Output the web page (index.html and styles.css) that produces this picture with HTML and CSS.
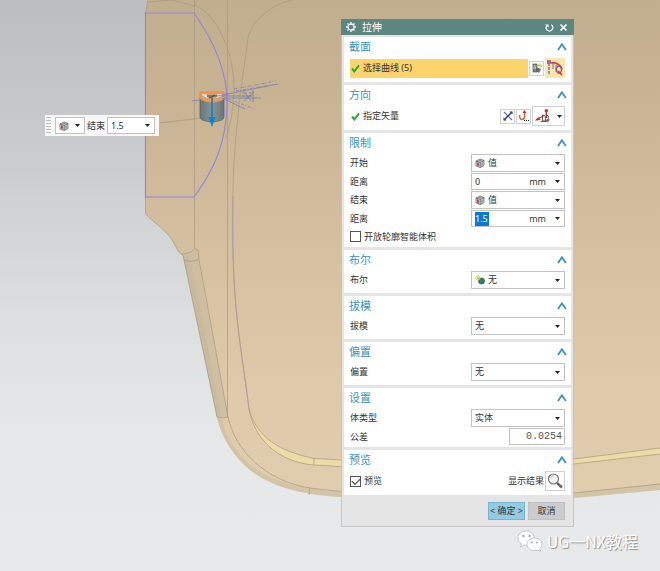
FILE: index.html
```html
<!DOCTYPE html>
<html lang="zh-CN">
<head>
<meta charset="utf-8">
<title>拉伸</title>
<link rel="stylesheet" href="styles.css">
</head>
<body>
<svg class="defs" width="0" height="0" aria-hidden="true">
  <symbol id="chevron" viewBox="0 0 10 8"><path d="M1 7 4.900 1.300 8.900 7" fill="none" stroke="#3a93bd" stroke-width="1.800"/></symbol>
  <symbol id="arrow" viewBox="0 0 5 3"><path d="M0 0h5L2.500 3z" fill="#222"/></symbol>
  <symbol id="tick" viewBox="0 0 9 9"><path d="M1 4.500 3.300 7.300 8 1.300" fill="none" stroke="#25ad38" stroke-width="2"/></symbol>
  <symbol id="cube" viewBox="0 0 10 10">
    <path d="M1 3 5 1l4 1.500v5L5.500 9.500 1 8z" fill="#d7d9d8" stroke="#626568" stroke-width=".8"/>
    <path d="M1 3l4.200 1.400L9 2.500M5.200 4.400v5" fill="none" stroke="#555" stroke-width=".8"/>
    <path d="M2 4.300l2 .8v3l-2-.6z" fill="#b8525a"/><path d="M6.300 5l1.800-.8v3L6.300 8.200z" fill="#7fae8b"/>
    <path d="M3 2.700 5 1.800l2 .6-2 1z" fill="#8c8db8"/>
  </symbol>
</svg>

<main class="viewport">
  <svg class="model" viewBox="0 0 660 571" preserveAspectRatio="xMinYMin slice" aria-hidden="true">
    <defs>
      <linearGradient id="skin" x1="0" y1="0" x2="0" y2="500" gradientUnits="userSpaceOnUse">
        <stop offset="0" stop-color="#c1ae8f"/><stop offset=".2" stop-color="#c8b493"/>
        <stop offset=".44" stop-color="#d2bd9e"/><stop offset=".6" stop-color="#d8c4a2"/>
        <stop offset=".8" stop-color="#dfcaab"/><stop offset="1" stop-color="#e0ceaf"/>
      </linearGradient>
      <linearGradient id="metal" x1="200" x2="224" y1="0" y2="0" gradientUnits="userSpaceOnUse">
        <stop offset="0" stop-color="#66777b"/><stop offset=".5" stop-color="#87949a"/><stop offset="1" stop-color="#687579"/>
      </linearGradient>
    </defs>
    <path fill="url(#skin)" d="M148 0 145.500 12V214C153 222 162 227 170 237 176 245 178 254 183 255L217 417C222 440 238 464 260 477 285 491 310 495 341 497Q470 510 574 498L660 490V0z"/>
    <path fill="#cbbca1" opacity=".75" d="M183 255C189 256 193 253 196 249L228 417H217z"/>
    <path fill="#bdb29c" opacity=".35" d="M183 256 217 417C222 440 238 464 260 477 285 491 310 495 341 497Q470 510 574 498L660 490V484L574 493Q450 503 341 492C312 490 287 486 264 474 242 462 226 441 221 417L190 256z"/>
    <path fill="#ecdda8" d="M249 409C257 438 279 451 314 458.500L341 460Q460 470 574 459L660 448V454L574 464Q460 477 341 466.500L314 465C277 462 254 438 249 409z"/>
    <g fill="none" stroke="#a8987f" stroke-width=".7">
      <path d="M148 0 145.500 12V214C153 222 162 227 170 237 176 245 178 254 183 255M194.500 0V248M227.500 0V417M149 2 172 0 194 6 198 0"/>
      <path d="M182 254C188 254 193 252 195 248L198 250 199 260 228 417M184 260Q192 263 199 259M217 417Q223 419 228 417C235 450 265 481 310 488L341 491.500M217 417 183 255M310 488 309 495"/>
      <path d="M292 0C274 4 250 20 248 39L240 95C235 145 232 170 233 230 233 310 240 340 249 409 257 438 279 451 314 458.500L341 460M249 409C254 438 277 462 314 465L341 466.500M314 458.500V465"/>
      <path d="M194 5C215 12 234 50 234 88 234 111 228 132 226 138M574 459 660 448M574 464 660 454M574 493 660 484"/>
      <path stroke="#a998a6" d="M233 196C230 300 242 350 249 409"/>
      <path d="M160 123 201 118"/>
    </g>
    <path d="M145.500 13H194C211 37 227 68 227 102 227 142 214 170 194 197H145.500z" fill="none" stroke="#9683e3" stroke-width="1.200"/>
    <path d="M200 97V117Q200 121 212 122 224 121 224 117V97z" fill="url(#metal)" stroke="#535e61" stroke-width=".7"/>
    <path d="M200 92H224V97Q224 101 212 102 200 101 200 97z" fill="#d3a175" stroke="#f39141" stroke-width="1.500"/>
    <path d="M202 94h4l2 4q-5-1-6-4M222 94h-4l-2 4q5-1 6-4" fill="#e2e0df"/>
    <path d="M207 96h10M209 98l6-3" stroke="#4e4c39"/>
    <path d="M212 97V119" stroke="#1777b6" stroke-width="1.500"/><path d="M208.500 117H215.500L212 127z" fill="#0788cf"/>
    <g fill="none" stroke="#6578ba" stroke-width=".7">
      <path d="M192 101 200 100M217 96 278 84M224 98H261M222 96H251M222 98 245 109M253 90V102"/>
      <path stroke="#8774a9" stroke-dasharray="3 1 1 2" d="M234 89 276 81M236 91 271 85M228 99 255 109M242 93H252M242 96H255"/>
      <path d="M243 90 251 101M244 101 254 92"/>
    </g>
  </svg>

  <form class="mini-bar">
    <span class="grip"></span>
    <span class="field mini-kind"><svg class="ico"><use href="#cube"/></svg><select aria-label="终点类型"><option></option></select><svg class="arrow"><use href="#arrow"/></svg></span>
    <label for="quick">结束</label>
    <span class="field mini-value"><input id="quick" type="text" value="1.5"><svg class="arrow"><use href="#arrow"/></svg></span>
  </form>

  <form class="dialog">
    <header class="titlebar">
      <svg class="gear" viewBox="0 0 10 10"><circle cx="5" cy="5" r="3" fill="none" stroke="#fff" stroke-width="1.300"/><path d="M5 0v1.500M5 8.500V10M0 5h1.500M8.500 5H10M1.500 1.500l1 1M7.500 7.500l1 1M8.500 1.500l-1 1M2.500 7.500l-1 1" stroke="#fff" stroke-width="1.300"/></svg>
      <h1>拉伸</h1>
      <button type="button" aria-label="重置"><svg viewBox="0 0 9 9"><path d="M6.300 1.800A3.300 3.300 0 1 1 1.600 3" fill="none" stroke="#fff" stroke-width="1.200"/><path d="M0 1.500h3.500v3z" fill="#fff"/></svg></button>
      <button type="button" aria-label="关闭"><svg viewBox="0 0 9 9"><path d="M1.500 1.500l6 6M7.500 1.500l-6 6" stroke="#fff" stroke-width="1.700"/></svg></button>
    </header>

    <section>
      <h2>截面<svg><use href="#chevron"/></svg></h2>
      <div class="row tall">
        <span class="pick active"><svg class="tick"><use href="#tick"/></svg>选择曲线 (5)</span>
        <button type="button" class="tool" aria-label="绘制截面"><svg viewBox="0 0 12 12"><path d="M2 2h4v8H2z" fill="#7f8884" stroke="#505652" stroke-width=".7"/><path d="M3 3l4 6M2 6h4" stroke="#ddd" stroke-width=".8"/><path d="M5 5l5 2-2 4-3-2z" fill="#626b67"/><path d="M9 1v5M6.500 3.500h5M7 2l4 3" stroke="#bad93d"/></svg></button>
        <button type="button" class="tool big lit" aria-label="曲线"><svg viewBox="0 0 18 18"><path d="M3 15V3" stroke="#5b63ba" stroke-width="1.300" stroke-dasharray="3 1"/><path d="M3 4Q12 2 16 10" fill="none" stroke="#d63c35" stroke-width="1.700"/><path d="M7 4v6M10 6v7" stroke="#7b69b1"/><path d="M1 1h4v4H1z" fill="#9a71a8"/><ellipse cx="13" cy="10.500" rx="2.500" ry="3.500" fill="none" stroke="#87559b" stroke-width="1.300"/><path d="M12 12l4 4" stroke="#cf3234" stroke-width="1.600"/></svg></button>
      </div>
    </section>

    <section>
      <h2>方向<svg><use href="#chevron"/></svg></h2>
      <div class="row tall">
        <span class="pick"><svg class="tick"><use href="#tick"/></svg>指定矢量</span>
        <button type="button" class="tool" aria-label="反向"><svg viewBox="0 0 12 12"><path d="M2 2l8 8" stroke="#6c7280" stroke-width="1.200"/><path d="M2 10l8-8" stroke="#2933b6" stroke-width="1.300"/><path d="M7.500 1.500h3v3zM1.500 7.500v3h3z" fill="#2933b6"/></svg></button>
        <button type="button" class="tool" aria-label="矢量对话框"><svg viewBox="0 0 12 12"><path d="M1.500 5Q1.500 9.500 4 9.500T6.500 7V2" fill="none" stroke="#d86539" stroke-width="1.500"/><path d="M4.500 3l2-3 2 3z" fill="#d52c29"/><path d="M6 10.500h1M8 10.500h1M10 10.500h1" stroke="#222" stroke-width="1.200"/></svg></button>
        <button type="button" class="tool wide" aria-label="自动判断矢量"><svg class="vector" viewBox="0 0 18 16"><path d="M1 12l8-4M12 10V3" fill="none" stroke="#bf302e" stroke-width="1.300"/><path d="M0 13l4-4 2 3z" fill="#d72929"/><circle cx="12" cy="2.500" r="1.800" fill="#d72929"/><path d="M8 7l3 1v6l-3-1zM11 6l3 2v4l-3 2M6 14l8-1" fill="none" stroke="#544943"/><path d="M12 11l4 1-3 3z" fill="#95634c"/></svg><svg class="arrow"><use href="#arrow"/></svg></button>
      </div>
    </section>

    <section class="limits">
      <h2>限制<svg><use href="#chevron"/></svg></h2>
      <div class="row"><label for="start">开始</label><span class="field"><svg class="ico"><use href="#cube"/></svg><select id="start"><option>值</option></select><svg class="arrow"><use href="#arrow"/></svg></span></div>
      <div class="row number"><label for="start-distance">距离</label><span class="field"><input id="start-distance" type="text" value="0"><span class="unit">mm</span><svg class="arrow"><use href="#arrow"/></svg></span></div>
      <div class="row"><label for="end">结束</label><span class="field"><svg class="ico"><use href="#cube"/></svg><select id="end"><option>值</option></select><svg class="arrow"><use href="#arrow"/></svg></span></div>
      <div class="row number"><label for="end-distance">距离</label><span class="field"><input id="end-distance" class="marked" type="text" value="1.5"><span class="unit">mm</span><svg class="arrow"><use href="#arrow"/></svg></span></div>
      <div class="row number"><label class="check"><input type="checkbox">开放轮廓智能体积</label></div>
    </section>

    <section>
      <h2>布尔<svg><use href="#chevron"/></svg></h2>
      <div class="row"><label for="boolean">布尔</label><span class="field"><svg class="ico" viewBox="0 0 10 10"><circle cx="6.500" cy="6" r="3" fill="#278365" stroke="#205444" stroke-width=".7"/><path d="M3 0v6M0 3h6M1 1l4 4M5 1 1 5" stroke="#c5cd49" stroke-width=".9"/></svg><select id="boolean"><option>无</option></select><svg class="arrow"><use href="#arrow"/></svg></span></div>
    </section>

    <section>
      <h2>拔模<svg><use href="#chevron"/></svg></h2>
      <div class="row"><label for="draft">拔模</label><span class="field"><select id="draft"><option>无</option></select><svg class="arrow"><use href="#arrow"/></svg></span></div>
    </section>

    <section>
      <h2>偏置<svg><use href="#chevron"/></svg></h2>
      <div class="row"><label for="offset">偏置</label><span class="field"><select id="offset"><option>无</option></select><svg class="arrow"><use href="#arrow"/></svg></span></div>
    </section>

    <section class="settings">
      <h2>设置<svg><use href="#chevron"/></svg></h2>
      <div class="row"><label for="body-type">体类型</label><span class="field"><select id="body-type"><option>实体</option></select><svg class="arrow"><use href="#arrow"/></svg></span></div>
      <div class="row number"><label for="tolerance">公差</label><span class="field tolerance"><input id="tolerance" type="text" value="0.0254"></span></div>
    </section>

    <section>
      <h2>预览<svg><use href="#chevron"/></svg></h2>
      <div class="row tall">
        <label class="check"><input type="checkbox" checked>预览</label>
        <label class="result" for="show-result">显示结果</label>
        <button type="button" class="tool big" id="show-result"><svg viewBox="0 0 18 18"><path d="M11 11l5 4.500" stroke="#666" stroke-width="2.400"/><circle cx="7.500" cy="7" r="5" fill="#f1f3f3" stroke="#777" stroke-width="1.200"/><path d="M4.500 6Q5.500 3.500 8 3.500" fill="none" stroke="#bbc1c3"/></svg></button>
      </div>
    </section>

    <footer>
      <button type="submit" class="ok">&lt; 确定 &gt;</button>
      <button type="button">取消</button>
    </footer>
  </form>

  <div class="brand">
    <svg viewBox="0 0 26 22" aria-hidden="true">
      <g fill="#fff" stroke="#b7b9ba" stroke-width=".8"><path d="M9.500 1C4.500 1 1 4 1 8c0 2.500 1.300 4.500 3.500 5.700L3.500 17 7 15q6 1 9-3c3-6-1-11-6.500-11z"/><path d="M17.500 8C13 8 10 10.700 10 14.200S13 20.500 17.500 20.500q1.500 0 3-.5l3 1.500-1-2.800c1.600-1.200 2.500-2.700 2.500-4.500C25 10.700 22 8 17.500 8z"/></g>
      <g fill="#a5a8aa"><circle cx="6.500" cy="6" r="1.200"/><circle cx="12.500" cy="6" r="1.200"/><circle cx="15" cy="12.500" r="1"/><circle cx="20" cy="12.500" r="1"/></g>
    </svg>
    <span>UG一NX教程</span>
  </div>
</main>
</body>
</html>
```
FILE: styles.css
```css
* { box-sizing: border-box; }

body {
  margin: 0;
  font: 9px/14px "Noto Sans", "Noto Sans CJK SC", sans-serif;
  color: #333;
}

svg { display: block; flex: none; }
.defs { position: absolute; }

button, input, select {
  margin: 0;
  padding: 0;
  border: 0;
  background: none;
  font: inherit;
  color: inherit;
}

.viewport {
  position: relative;
  min-height: 100vh;
  overflow: hidden;
  background: linear-gradient(#bcbdbf 0%, #cbcdcf 30%, #dcdfe0 55%, #e6e8e9 78%, #e8e9ea 100%);
}

.model {
  position: absolute;
  inset: 0;
  width: 100%;
  height: 100%;
}

/* Shared field */
.field {
  display: flex;
  align-items: center;
  gap: 3px;
  width: 94px;
  height: 100%;
  padding: 0 4px 0 3px;
  border: 1px solid #c2c2c2;
  background: #fff;
}
.field select, .field input {
  flex: 1;
  min-width: 0;
  height: 14px;
  appearance: none;
  outline: 0;
}
.field input.marked {
  flex: none;
  width: 14px;
  background: #0878d4;
  color: #fff;
}
.unit { margin-left: auto; padding-right: 6px; }
.ico { width: 10px; height: 10px; }
.arrow { width: 5px; height: 3px; }

/* On-canvas input bar */
.mini-bar {
  position: absolute;
  left: 45px;
  top: 115px;
  display: flex;
  align-items: center;
  gap: 2px;
  height: 21px;
  padding: 2px 4px 2px 1px;
  background: #f7f7f7;
}
.grip {
  width: 5px;
  height: 100%;
  margin-right: 2px;
  background: repeating-linear-gradient(#bbb 0 1px, transparent 1px 3px);
}
.mini-kind { width: 30px; }
.mini-value { width: 48px; }

/* Dialog */
.dialog {
  position: absolute;
  left: 341px;
  top: 19px;
  width: 233px;
  border: 1px solid #c5c5c5;
  border-top: 0;
  background: #e5e5e6;
}
.titlebar {
  display: flex;
  align-items: center;
  gap: 5px;
  height: 16px;
  margin: 0 -1px 2px;
  padding: 0 6px 0 5px;
  background: #5c8680;
  color: #fff;
}
.titlebar h1 {
  flex: 1;
  margin: 0 0 0 1px;
  font-size: 10px;
  font-weight: 400;
}
.titlebar svg { width: 9px; height: 9px; }
.titlebar .gear { width: 10px; height: 10px; }

section {
  margin: 0 2px 3px;
  padding: 0 6px 4px 5px;
  background: #fff;
}
section:last-of-type { margin-bottom: 0; }
h2 {
  display: flex;
  align-items: center;
  justify-content: space-between;
  height: 20px;
  margin: 0 -2px 1px 0;
  font-size: 11px;
  font-weight: 400;
  color: #3a93bd;
}
h2 svg { width: 10px; height: 8px; }

.row {
  display: flex;
  align-items: center;
  justify-content: space-between;
  height: 18px;
  padding-left: 1px;
}
.row + .row { margin-top: 1px; }
.number { height: 17px; }
.tall { height: 20px; gap: 1px; }
.limits, .settings { padding-bottom: 2px; }

.pick {
  display: flex;
  flex: 1;
  align-items: center;
  gap: 3px;
  height: 19px;
  padding-left: 1px;
}
.active { background: #fbd46c; }
.tick { width: 9px; height: 9px; }

.tool {
  display: flex;
  flex: none;
  align-items: center;
  justify-content: center;
  width: 15px;
  height: 15px;
  border: 1px solid #d0d0d0;
  background: #fff;
}
.tool svg { width: 12px; height: 12px; }
.big, .wide { width: 20px; height: 20px; }
.big svg { width: 18px; height: 18px; }
.lit { border-color: #fbe8b4; background: #fbe5aa; }
.wide { gap: 5px; width: 33px; }
.wide .vector { width: 17px; height: 16px; }
.wide .arrow { width: 5px; height: 3px; }

.check {
  display: flex;
  align-items: center;
  gap: 3px;
}
.check input {
  display: grid;
  place-items: center;
  width: 11px;
  height: 11px;
  appearance: none;
  border: 1px solid #555;
  background: #fff;
}
.check input:checked::before {
  content: "";
  width: 7px;
  height: 4px;
  border: solid #333;
  border-width: 0 0 1px 1px;
  transform: translateY(-1px) rotate(-45deg);
}
.result { margin-left: auto; }

.tolerance { width: 56px; padding-right: 2px; }
.tolerance input {
  font: 10px/14px "Liberation Mono", monospace;
  color: #555;
  text-align: right;
}

footer {
  display: flex;
  justify-content: flex-end;
  gap: 3px;
  padding: 7px 8px 6px;
}
footer button {
  width: 37px;
  height: 18px;
  border: 1px solid #c0c0c0;
  background: #cbcccd;
  white-space: nowrap;
}
footer .ok { border-color: #78b5d2; background: #93cbe3; }

.brand {
  position: absolute;
  right: 22px;
  bottom: 18px;
  display: flex;
  align-items: center;
  gap: 4px;
  font: 16px/24px "Noto Sans CJK SC", sans-serif;
  color: #fff;
  text-shadow: 1px 1px 1px #8f9193;
}
.brand svg { width: 26px; height: 22px; }
```
